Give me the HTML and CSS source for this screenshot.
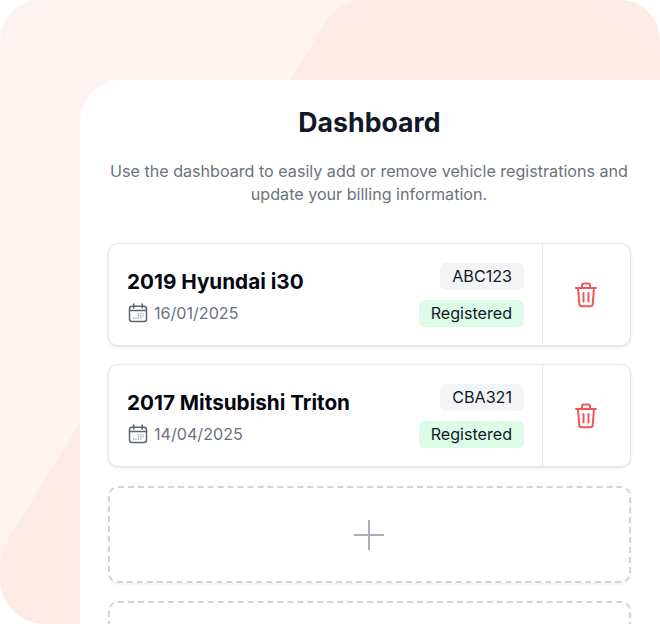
FILE: index.html
```html
<!DOCTYPE html>
<html lang="en">
<head>
    <meta charset="UTF-8">
    <meta name="viewport" content="width=device-width, initial-scale=1.0">
    <title>Dashboard</title>
    <link rel="stylesheet" href="styles.css">
</head>
<body>
    <div class="backdrop">
        <svg class="backdrop-shape" width="660" height="624" viewBox="0 0 660 624">
            <path d="M375 0 H620 A40 40 0 0 1 660 40 V624 H45 A45 45 0 0 1 0 579 V570 A60 60 0 0 1 9 538 L325 23 A48 48 0 0 1 375 0 Z"/>
        </svg>
        <main class="dashboard">
            <h1 class="dashboard-title">Dashboard</h1>
            <p class="dashboard-intro">Use the dashboard to easily add or remove vehicle registrations and update your billing information.</p>

            <div class="vehicle-list">
                <div class="vehicle-card">
                    <div class="vehicle-info">
                        <div class="vehicle-main">
                            <div class="vehicle-name">2019 Hyundai i30</div>
                            <div class="vehicle-date">
                                <svg class="icon-calendar" width="20" height="20" viewBox="0 0 20 20" fill="none">
                                    <rect x="1.5" y="3.2" width="17" height="15.3" rx="2.5"/>
                                    <path d="M1.5 7.5H18.5M5.8 1V5M14.2 1V5"/>
                                    <path class="calendar-dots" d="M5 15H6.2M7.4 15H8.6M9.8 15H11M9.8 12.8H11M9.8 10.6H11M12.2 15H13.4M12.2 12.8H13.4M12.2 10.6H13.4M14.6 10.6H15.6M14.6 12.8H15.6"/>
                                </svg>
                                <span>16/01/2025</span>
                            </div>
                        </div>
                        <div class="vehicle-tags">
                            <span class="tag tag-plate">ABC123</span>
                            <span class="tag tag-status">Registered</span>
                        </div>
                    </div>
                    <div class="vehicle-delete">
                        <svg class="icon-trash" width="24" height="26" viewBox="0 0 24 26" fill="none">
                            <path d="M2 6H22M8 6V3.5A2 2 0 0 1 10 1.5H14A2 2 0 0 1 16 3.5V6"/>
                            <path d="M4 6L5.3 22A2.5 2.5 0 0 0 7.8 24.3H16.2A2.5 2.5 0 0 0 18.7 22L20 6"/>
                            <path d="M9.5 11V19.5M14.5 11V19.5"/>
                        </svg>
                    </div>
                </div>

                <div class="vehicle-card">
                    <div class="vehicle-info">
                        <div class="vehicle-main">
                            <div class="vehicle-name">2017 Mitsubishi Triton</div>
                            <div class="vehicle-date">
                                <svg class="icon-calendar" width="20" height="20" viewBox="0 0 20 20" fill="none">
                                    <rect x="1.5" y="3.2" width="17" height="15.3" rx="2.5"/>
                                    <path d="M1.5 7.5H18.5M5.8 1V5M14.2 1V5"/>
                                    <path class="calendar-dots" d="M5 15H6.2M7.4 15H8.6M9.8 15H11M9.8 12.8H11M9.8 10.6H11M12.2 15H13.4M12.2 12.8H13.4M12.2 10.6H13.4M14.6 10.6H15.6M14.6 12.8H15.6"/>
                                </svg>
                                <span>14/04/2025</span>
                            </div>
                        </div>
                        <div class="vehicle-tags">
                            <span class="tag tag-plate">CBA321</span>
                            <span class="tag tag-status">Registered</span>
                        </div>
                    </div>
                    <div class="vehicle-delete">
                        <svg class="icon-trash" width="24" height="26" viewBox="0 0 24 26" fill="none">
                            <path d="M2 6H22M8 6V3.5A2 2 0 0 1 10 1.5H14A2 2 0 0 1 16 3.5V6"/>
                            <path d="M4 6L5.3 22A2.5 2.5 0 0 0 7.8 24.3H16.2A2.5 2.5 0 0 0 18.7 22L20 6"/>
                            <path d="M9.5 11V19.5M14.5 11V19.5"/>
                        </svg>
                    </div>
                </div>

                <div class="add-card">
                    <svg class="icon-plus" width="32" height="32" viewBox="0 0 32 32" fill="none">
                        <path d="M16 1V31M1 16H31"/>
                    </svg>
                </div>
                <div class="add-card"></div>
            </div>
        </main>
    </div>
</body>
</html>
```

FILE: styles.css
```css
* {
    box-sizing: border-box;
}

html, body {
    margin: 0;
    height: 624px;
    overflow: hidden;
    background: white;
}

body {
    font-family: "Inter", "Liberation Sans", sans-serif;
}

/* Pink background behind the card */
.backdrop {
    position: relative;
    height: 624px;
    padding: 80px 0 0 80px;
    background: #fef3f1;
    border-radius: 40px 40px 0 45px;
    overflow: hidden;
}

.backdrop-shape {
    position: absolute;
    top: 0;
    left: 0;
}

.backdrop-shape path {
    fill: #feebe8;
}

/* White dashboard card */
.dashboard {
    position: relative;
    height: 544px;
    padding: 22px 29px 0 28px;
    background: white;
    border-radius: 40px 0 0 0;
}

.dashboard-title {
    margin: 0;
    color: #111827;
    font-size: 26.7px;
    line-height: 40px;
    font-weight: 700;
    text-align: center;
}

.dashboard-intro {
    margin: 18px 1px 0 0;
    color: #6b7280;
    font-size: 16.13px;
    line-height: 23px;
    text-align: center;
}

/* Vehicle rows */
.vehicle-list {
    display: flex;
    flex-direction: column;
    gap: 18px;
    margin-top: 37px;
}

.vehicle-card {
    display: flex;
    height: 103px;
    background: white;
    border: 1px solid #e5e7eb;
    border-radius: 10px;
    box-shadow: 0 1px 3px rgba(0, 0, 0, 0.12);
}

.vehicle-info {
    flex: 1;
    display: flex;
    justify-content: space-between;
    align-items: center;
    padding: 0 18px;
    border-right: 1px solid #e5e7eb;
}

.vehicle-name {
    color: #030712;
    font-size: 20.7px;
    line-height: 35px;
    font-weight: 700;
}

.vehicle-date {
    display: flex;
    align-items: center;
    gap: 6px;
    margin-top: 2px;
    padding-left: 1px;
    color: #6b7280;
    font-size: 16.13px;
    line-height: 24px;
}

.vehicle-tags {
    display: flex;
    flex-direction: column;
    align-items: flex-end;
    gap: 10px;
}

.tag {
    padding: 0 12px;
    color: #111827;
    font-size: 16.13px;
    line-height: 27px;
    border-radius: 6px;
}

.tag-plate {
    background: #f3f4f6;
}

.tag-status {
    background: #dcfce7;
}

.vehicle-delete {
    width: 87px;
    flex: none;
    display: flex;
    justify-content: center;
    align-items: center;
    padding-right: 2px;
}

/* Icons */
.icon-calendar rect,
.icon-calendar path {
    stroke: #5b6472;
    stroke-width: 1.5;
    stroke-linecap: round;
}

.icon-calendar .calendar-dots {
    stroke: #9ca3af;
    stroke-width: 1.4;
    stroke-linecap: butt;
}

.icon-trash path {
    stroke: #f25555;
    stroke-width: 2;
    stroke-linecap: round;
    stroke-linejoin: round;
}

.icon-plus path {
    stroke: #a9afbc;
    stroke-width: 2;
}

/* Empty slots */
.add-card {
    flex: none;
    display: flex;
    justify-content: center;
    align-items: center;
    height: 97px;
    padding-right: 2px;
    border: 2px dashed #d1d5db;
    border-radius: 10px;
    box-shadow: 0 1px 3px rgba(0, 0, 0, 0.08);
}

.vehicle-card + .add-card {
    margin-top: 1px;
}
```
